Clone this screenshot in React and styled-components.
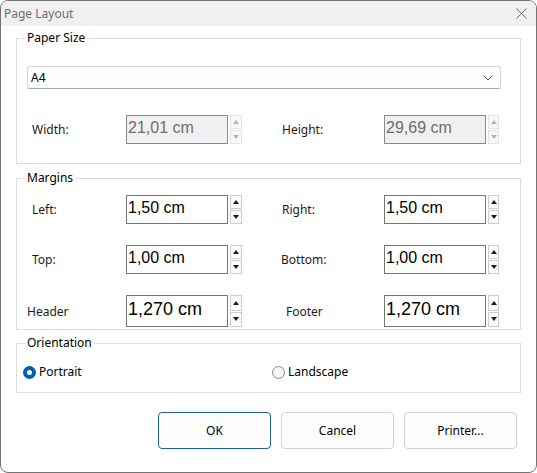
import React from 'react'
import styled, { createGlobalStyle } from 'styled-components'

const GlobalStyle = createGlobalStyle`
  html, body {
    margin: 0;
    background: #ffffff;
  }
  body {
    font-family: "Noto Sans", "Open Sans", sans-serif;
    font-size: 12px;
  }
`

const Window = styled.div`
  width: 537px;
  height: 473px;
  box-sizing: border-box;
  border: 1px solid #737373;
  border-radius: 8px;
  overflow: hidden;
  display: flex;
  flex-direction: column;
  background: #ffffff;
`

const TitleBar = styled.div`
  height: 25px;
  flex: none;
  display: flex;
  align-items: center;
  justify-content: space-between;
  background: #f0f0f0;
  padding: 0 9px 0 3px;
`

const Title = styled.span`
  font-size: 12px;
  color: #6e6e6e;
`

const Body = styled.div`
  flex: 1;
  display: flex;
  flex-direction: column;
  padding: 0 15px;
`

const Group = styled.fieldset`
  margin: ${({ $top }) => $top}px 0 0 0;
  padding: ${({ $pad }) => $pad};
  border: 1px solid #dcdcdc;
  min-width: 0;
`

const Legend = styled.legend`
  margin-left: 8px;
  padding: 0 2px;
  font-size: 12px;
  line-height: 16px;
  color: #000;
`

const SelectBox = styled.div`
  height: 23px;
  box-sizing: border-box;
  margin: 0 19px 0 10px;
  display: flex;
  align-items: center;
  justify-content: space-between;
  padding: 0 7px 0 3px;
  border: 1px solid #d3d3d3;
  border-bottom-color: #a8a8a8;
  border-radius: 3px;
  background: #fdfdfd;
  font-size: 12px;
  color: #000;
`

const FormRow = styled.div`
  display: grid;
  grid-template-columns: 99px 155px 103px 115px;
  align-items: center;
  padding-left: 10px;
  margin-top: ${({ $top }) => $top || 0}px;
`

const Rows = styled.div`
  display: flex;
  flex-direction: column;
  gap: 21px;
`

const Label = styled.span`
  margin-left: ${({ $indent }) => $indent || 0}px;
  font-size: 12px;
  color: #1a1a1a;
`

const FieldWrap = styled.div`
  display: flex;
  height: ${({ $big }) => ($big ? 32 : 29)}px;
`

const NumInput = styled.input`
  width: 102px;
  height: 100%;
  box-sizing: border-box;
  margin: 0;
  padding: 0 0 3px 1px;
  border: 1px solid ${({ $off }) => ($off ? '#8a8a8a' : '#767676')};
  border-radius: 0;
  outline: none;
  background: ${({ $off }) => ($off ? '#f0f0f0' : '#ffffff')};
  color: ${({ $off }) => ($off ? '#6d6d6d' : '#000000')};
  font-family: "Liberation Sans", Arial, sans-serif;
  font-size: ${({ $big }) => ($big ? 18 : 16)}px;
`

const Spin = styled.div`
  display: flex;
  flex-direction: column;
  gap: 1px;
  width: 12px;
  margin-left: 2px;
`

const SpinBtn = styled.span`
  flex: 1;
  display: flex;
  align-items: center;
  justify-content: center;
  border: 1px solid ${({ $off }) => ($off ? '#e2e2e2' : '#cdcdcd')};
  background: ${({ $off }) => ($off ? '#f7f7f7' : '#fbfbfb')};
`

const Arrow = styled.span`
  width: 0;
  height: 0;
  border-left: 3px solid transparent;
  border-right: 3px solid transparent;
  ${({ $dir, $off }) =>
    $dir === 'up'
      ? `border-bottom: 4px solid ${$off ? '#b4b4b4' : '#1a1a1a'};`
      : `border-top: 4px solid ${$off ? '#b4b4b4' : '#1a1a1a'};`}
`

const RadioRow = styled.div`
  display: grid;
  grid-template-columns: 249px auto;
  padding-left: 6px;
`

const RadioItem = styled.label`
  display: flex;
  align-items: center;
  gap: 3px;
  font-size: 12px;
  line-height: 16px;
  color: #000;
`

const RadioDot = styled.span`
  width: 13px;
  height: 13px;
  box-sizing: border-box;
  border-radius: 50%;
  border: ${({ $on }) => ($on ? '4px solid #005fb8' : '1px solid #8a8a8a')};
  background: ${({ $on }) => ($on ? '#ffffff' : '#f6f6f6')};
`

const ButtonRow = styled.div`
  display: flex;
  justify-content: flex-end;
  gap: 10px;
  margin-top: 19px;
  padding-right: 4px;
`

const Button = styled.button`
  width: 113px;
  height: 37px;
  box-sizing: border-box;
  border: 1px solid ${({ $primary }) => ($primary ? '#1b5fa8' : '#d2d2d2')};
  border-radius: 4px;
  background: #fdfdfd;
  font-family: "Noto Sans", "Open Sans", sans-serif;
  font-size: 12px;
  color: #000;
`

const Field = ({ value, off, big }) => (
  <FieldWrap $big={big}>
    <NumInput defaultValue={value} readOnly $off={off} $big={big} />
    <Spin>
      <SpinBtn $off={off}><Arrow $dir="up" $off={off} /></SpinBtn>
      <SpinBtn $off={off}><Arrow $dir="down" $off={off} /></SpinBtn>
    </Spin>
  </FieldWrap>
)

const margins = [
  { a: 'Left:', ai: 5, av: '1,50 cm', b: 'Right:', bi: 1, bv: '1,50 cm' },
  { a: 'Top:', ai: 5, av: '1,00 cm', b: 'Bottom:', bi: 0, bv: '1,00 cm' },
  { a: 'Header', ai: 0, av: '1,270 cm', b: 'Footer', bi: 5, bv: '1,270 cm', big: true },
]

export default function App() {
  return (
    <>
      <GlobalStyle />
      <Window>
        <TitleBar>
          <Title>Page Layout</Title>
          <svg width="11" height="11" viewBox="0 0 11 11">
            <path d="M0.5 0.5 L10.5 10.5 M10.5 0.5 L0.5 10.5" stroke="#6a6a6a" strokeWidth="1" />
          </svg>
        </TitleBar>
        <Body>
          <Group $top={4} $pad="20px 0 19px 0">
            <Legend>Paper Size</Legend>
            <SelectBox>
              <span>A4</span>
              <svg width="10" height="6" viewBox="0 0 10 6">
                <path d="M0.5 0.5 L5 5 L9.5 0.5" fill="none" stroke="#555" strokeWidth="1" />
              </svg>
            </SelectBox>
            <FormRow $top={26}>
              <Label $indent={5}>Width:</Label>
              <Field value="21,01 cm" off />
              <Label $indent={1}>Height:</Label>
              <Field value="29,69 cm" off />
            </FormRow>
          </Group>

          <Group $top={6} $pad="9px 0 2px 0">
            <Legend>Margins</Legend>
            <Rows>
              {margins.map((m) => (
                <FormRow key={m.a}>
                  <Label $indent={m.ai}>{m.a}</Label>
                  <Field value={m.av} big={m.big} />
                  <Label $indent={m.bi}>{m.b}</Label>
                  <Field value={m.bv} big={m.big} />
                </FormRow>
              ))}
            </Rows>
          </Group>

          <Group $top={5} $pad="13px 0 12px 0">
            <Legend>Orientation</Legend>
            <RadioRow>
              <RadioItem><RadioDot $on />Portrait</RadioItem>
              <RadioItem><RadioDot />Landscape</RadioItem>
            </RadioRow>
          </Group>

          <ButtonRow>
            <Button $primary>OK</Button>
            <Button>Cancel</Button>
            <Button>Printer...</Button>
          </ButtonRow>
        </Body>
      </Window>
    </>
  )
}
